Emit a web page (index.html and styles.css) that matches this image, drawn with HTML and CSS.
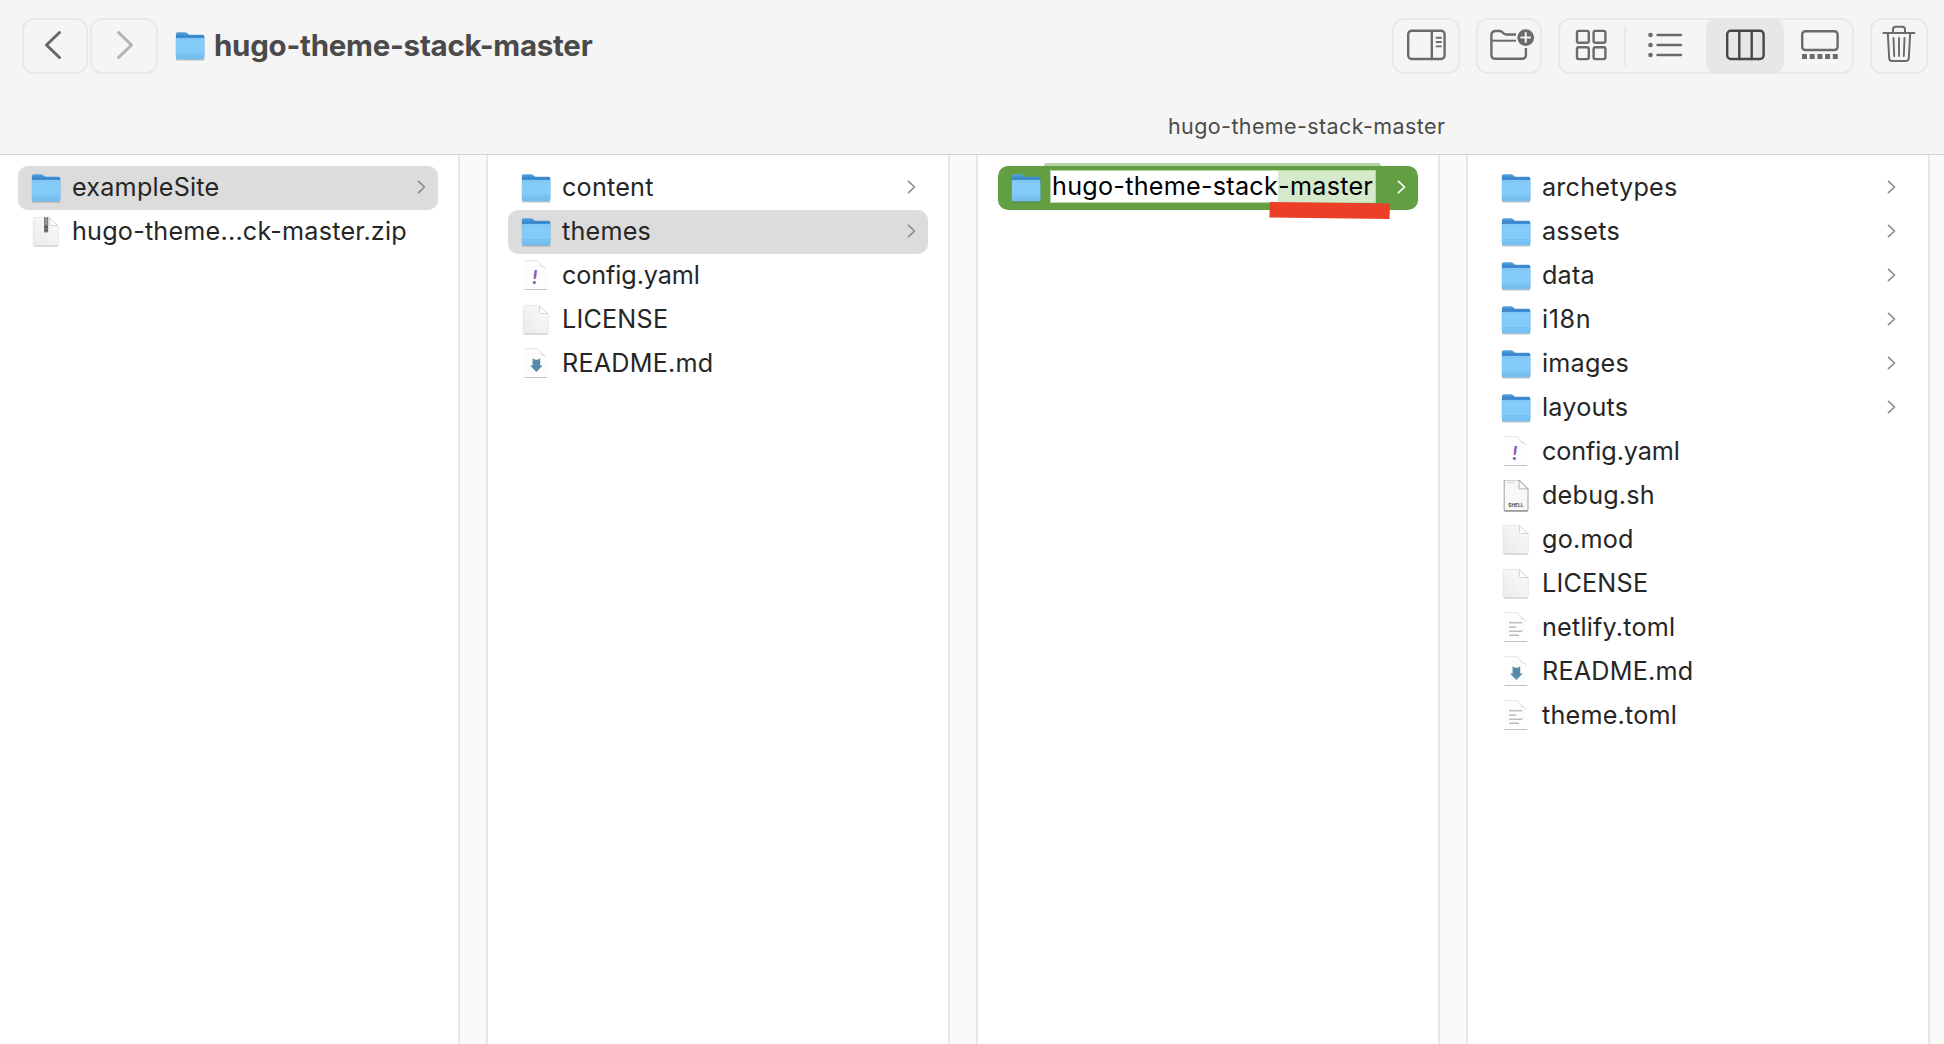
FILE: index.html
```html
<!DOCTYPE html>
<html lang="en">
<head>
<meta charset="utf-8">
<title>hugo-theme-stack-master</title>
<link rel="stylesheet" href="styles.css">
</head>
<body>
<svg class="defs" width="0" height="0" aria-hidden="true">
  <defs>
    <linearGradient id="g-back" x1="0" y1="0" x2="0" y2="1"><stop offset="0" stop-color="#57a4dc"/><stop offset=".22" stop-color="#2f7cc6"/><stop offset="1" stop-color="#3f8fd0"/></linearGradient>
    <linearGradient id="g-front" x1="0" y1="0" x2="0" y2="1"><stop offset="0" stop-color="#7fc4f2"/><stop offset=".2" stop-color="#86ccf8"/><stop offset=".75" stop-color="#82caf8"/><stop offset="1" stop-color="#70bbea"/></linearGradient>
    <linearGradient id="g-doc" x1="1" y1="0" x2="0" y2="1"><stop offset="0" stop-color="#fafafa"/><stop offset=".5" stop-color="#f3f3f3"/><stop offset="1" stop-color="#e9e9e9"/></linearGradient>
  </defs>
  <symbol id="folder" viewBox="0 0 30 32">
    <path d="M1 29.9h28.4" stroke="#000" stroke-opacity=".3" stroke-width="1"/>
    <path d="M.9 4Q.9 2.200 2.600 2.200h7.500q1 0 1.800.7l1.600 1.300q.6.5 1.500.5h12.700q1.600 0 1.600 1.600V27H.9z" fill="url(#g-back)"/>
    <path d="M.9 9Q.9 7.700 2.200 7.700h25.800q1.300 0 1.300 1.300v19q0 1.400-1.400 1.400H2.300Q.9 29.400.9 28z" fill="url(#g-front)"/>
    <path d="M1 23.800h28.200" stroke="#6ab6e8" stroke-width=".7"/><path d="M1 26h28.200" stroke="#6ab6e8" stroke-width=".6"/>
  </symbol>
  <symbol id="doc" viewBox="0 0 30 32">
    <path d="M3.500 1.300H18l9.300 8.700v18.700q0 1.300-1.300 1.300H3.500q-1.300 0-1.300-1.300v-26q0-1.400 1.300-1.400z" fill="url(#g-doc)" stroke="#e2e2e2" stroke-width=".8"/>
    <path d="M3 30.100h23.600" stroke="#c9c9c9" stroke-width="1"/>
    <path d="M18.400 1.700v6.600q0 1.200 1.200 1.200h7z" fill="#fff" stroke="#cdcdcd" stroke-width=".8"/>
  </symbol>
  <symbol id="zip" viewBox="0 0 30 32">
    <use href="#doc" width="30" height="32"/>
    <path d="M13 1h4.200v14.500q0 1-1 1H14q-1 0-1-1z" fill="#777b7e"/>
    <path d="M15.100 1v8" stroke="#d4d7d8" stroke-width="1.400" stroke-dasharray="1.300 1.300"/>
    <path d="M13.800 10h2.600v5h-2.600z" fill="#45494c"/><path d="M14.700 11.500h.8v2.500h-.8z" fill="#ccc"/>
  </symbol>
  <symbol id="page" viewBox="0 0 30 32">
    <path d="M3.700.8h13.300l8.800 8.500V29H3.700z" fill="#fdfdfd"/>
    <path d="M3.700.7H16q2 .4 3 3" fill="none" stroke="#e2e2e2" stroke-width=".9"/>
    <path d="M17 1.500q2 1 2 4.500 4 0 6.400 3.200z" fill="#e9e9e9"/><path d="M20 6.200q3.500.2 5.400 3" fill="none" stroke="#d2d2d2" stroke-width=".9"/>
    <path d="M3.500 29.500h22.800" stroke="#c2c2c2" stroke-width="1"/>
  </symbol>
  <symbol id="md" viewBox="0 0 30 32">
    <use href="#page" width="30" height="32"/>
    <path d="M11.600 10.300q3.800 3 7.600 0V17.500h2.500L15.400 23.900l-6.400-6.400h2.600z" fill="#568aa9"/>
  </symbol>
  <symbol id="toml" viewBox="0 0 30 32">
    <use href="#page" width="30" height="32"/>
    <path d="M8 10.800h13.300M8 15h7.300M8 19.200h13.300M8 23.300h10" stroke="#bdbdbd" stroke-width="1.400"/>
  </symbol>
  <symbol id="shell" viewBox="0 0 30 32">
    <path d="M3.200 0H18l9 9v21q0 1-1 1H4.200q-1 0-1-1z" fill="#f8f8f8" stroke="#a9a9a9" stroke-width="1.100"/>
    <path d="M3.500 30.900h23" stroke="#7d7d7d" stroke-width="1.100"/>
    <path d="M18 .5v8.300h8.500z" fill="#fff" stroke="#aaa" stroke-width=".9"/>
    <path d="M6 2.800h7.500" stroke="#c4c4c4" stroke-width=".7"/>
  </symbol>
  <symbol id="chev" viewBox="0 0 10 16"><path d="M1.500 2.400l6 5.600-6 5.600" fill="none" stroke="currentColor" stroke-width="1.700" stroke-linecap="round" stroke-linejoin="round"/></symbol>
</svg>

<header class="toolbar">
  <div class="bar">
    <button class="btn back"><svg width="20" height="32" viewBox="0 0 20 32"><path d="M16.500 3.500L3.500 16l13 12.500" /></svg></button>
    <button class="btn forward"><svg width="20" height="32" viewBox="0 0 20 32"><path d="M3.500 3.500L16.500 16l-13 12.500" /></svg></button>
    <svg class="title-icon" width="30" height="32"><use href="#folder"/></svg>
    <h1 class="title">hugo-theme-stack-master</h1>
    <div class="tools">
      <button class="btn sidebar"><svg width="44" height="44" viewBox="0 0 44 44"><rect x="4.200" y="6.800" width="36.400" height="28.200" rx="3.500"/><path d="M27.800 7v28"/><path class="thin" d="M32.500 13.700h4.500M32.500 18h4.500M32.500 22.400h4.500"/></svg></button>
      <button class="btn newfolder"><svg width="44" height="44" viewBox="0 0 44 44"><path class="butt" d="M29 10.500H19c-3 0-3.200-3.500-6.200-3.500H8.500Q4.400 7 4.400 11.200v19.500q0 4.100 4.100 4.100h26.200q4.200 0 4.200-4.100V24"/><path class="mid butt" d="M4.200 16.700H29"/><circle class="solid" cx="38.700" cy="13.600" r="8.400"/><path class="plus" d="M34.200 13.600h9M38.700 9.100v9"/></svg></button>
      <div class="views">
        <button class="view grid"><svg width="44" height="44" viewBox="0 0 44 44"><rect x="7" y="6.900" width="11.800" height="11.800" rx="1.800"/><rect x="23.600" y="6.900" width="11.800" height="11.800" rx="1.800"/><rect x="7" y="23.300" width="11.800" height="11.800" rx="1.800"/><rect x="23.600" y="23.300" width="11.800" height="11.800" rx="1.800"/></svg></button>
        <button class="view list"><svg width="44" height="44" viewBox="0 0 44 44"><path d="M13.500 11H37M13.500 21H37M13.500 31H37"/><g class="solid"><circle cx="6.500" cy="11" r="2.300"/><circle cx="6.500" cy="21" r="2.300"/><circle cx="6.500" cy="31" r="2.300"/></g></svg></button>
        <button class="view columns-view active"><svg width="44" height="44" viewBox="0 0 44 44"><rect x="4.200" y="6.800" width="36.400" height="28.200" rx="3.500"/><path d="M16.300 7v28M28.700 7v28"/></svg></button>
        <button class="view gallery"><svg width="44" height="44" viewBox="0 0 44 44"><rect x="5.200" y="7.200" width="35.400" height="18.800" rx="3.200"/><g class="solid"><rect x="5" y="30" width="5" height="5" rx=".6"/><rect x="12.700" y="30" width="5" height="5" rx=".6"/><rect x="20.400" y="30" width="5" height="5" rx=".6"/><rect x="28.100" y="30" width="5" height="5" rx=".6"/><rect x="35.800" y="30" width="5" height="5" rx=".6"/></g></svg></button>
      </div>
      <button class="btn trash"><svg width="44" height="44" viewBox="0 0 44 44"><path class="mid" d="M6.500 9h31M16 8.800V5.300Q16 2.700 18.600 2.700h6.800Q28 2.700 28 5.300v3.500M10.800 9.300l1.400 24.800q.2 2.900 3 2.900h13.600q2.800 0 3-2.900l1.400-24.800"/><path class="thin" d="M16.500 14l.7 18M22 14v18M27.500 14l-.7 18"/></svg></button>
    </div>
  </div>
  <div class="path">hugo-theme-stack-master</div>
</header>

<main class="browser">
  <ul class="column">
    <li class="row selected"><svg class="icon"><use href="#folder"/></svg><span class="name">exampleSite</span><svg class="chev"><use href="#chev"/></svg></li>
    <li class="row"><svg class="icon"><use href="#zip"/></svg><span class="name">hugo-theme...ck-master.zip</span></li>
  </ul>
  <div class="gutter"></div>
  <ul class="column">
    <li class="row"><svg class="icon"><use href="#folder"/></svg><span class="name">content</span><svg class="chev"><use href="#chev"/></svg></li>
    <li class="row selected"><svg class="icon"><use href="#folder"/></svg><span class="name">themes</span><svg class="chev"><use href="#chev"/></svg></li>
    <li class="row"><svg class="icon"><use href="#page"/><text x="11.200" y="24" class="bang">!</text></svg><span class="name yaml">config.yaml</span></li>
    <li class="row"><svg class="icon"><use href="#doc"/></svg><span class="name">LICENSE</span></li>
    <li class="row"><svg class="icon"><use href="#md"/></svg><span class="name">README.md</span></li>
  </ul>
  <div class="gutter"></div>
  <ul class="column">
    <li class="row editing"><svg class="icon"><use href="#folder"/></svg><span class="field">hugo-theme-stack<span class="picked">-master</span></span><svg class="chev"><use href="#chev"/></svg>
      <svg class="marker" width="122" height="18" viewBox="0 0 122 18"><path d="M.8 0L121 1.500 120.500 17 .5 15.600z" fill="#eb4027"/></svg></li>
  </ul>
  <div class="gutter"></div>
  <ul class="column">
    <li class="row"><svg class="icon"><use href="#folder"/></svg><span class="name">archetypes</span><svg class="chev"><use href="#chev"/></svg></li>
    <li class="row"><svg class="icon"><use href="#folder"/></svg><span class="name">assets</span><svg class="chev"><use href="#chev"/></svg></li>
    <li class="row"><svg class="icon"><use href="#folder"/></svg><span class="name">data</span><svg class="chev"><use href="#chev"/></svg></li>
    <li class="row"><svg class="icon"><use href="#folder"/></svg><span class="name wide">i18n</span><svg class="chev"><use href="#chev"/></svg></li>
    <li class="row"><svg class="icon"><use href="#folder"/></svg><span class="name">images</span><svg class="chev"><use href="#chev"/></svg></li>
    <li class="row"><svg class="icon"><use href="#folder"/></svg><span class="name">layouts</span><svg class="chev"><use href="#chev"/></svg></li>
    <li class="row"><svg class="icon"><use href="#page"/><text x="11.200" y="24" class="bang">!</text></svg><span class="name yaml">config.yaml</span></li>
    <li class="row"><svg class="icon"><use href="#shell"/><text x="7.200" y="26.800" class="shell-label" textLength="15.400" lengthAdjust="spacingAndGlyphs">SHELL</text></svg><span class="name">debug.sh</span></li>
    <li class="row"><svg class="icon"><use href="#doc"/></svg><span class="name">go.mod</span></li>
    <li class="row"><svg class="icon"><use href="#doc"/></svg><span class="name">LICENSE</span></li>
    <li class="row"><svg class="icon"><use href="#toml"/></svg><span class="name">netlify.toml</span></li>
    <li class="row"><svg class="icon"><use href="#md"/></svg><span class="name">README.md</span></li>
    <li class="row"><svg class="icon"><use href="#toml"/></svg><span class="name">theme.toml</span></li>
  </ul>
  <div class="gutter"></div>
</main>
</body>
</html>
```
FILE: styles.css
```css
* { box-sizing: border-box; }
body {
  margin: 0;
  width: 1944px;
  height: 1044px;
  overflow: hidden;
  display: flex;
  flex-direction: column;
  background: #fff;
  color: #262626;
  font-family: Inter, "Liberation Sans", sans-serif;
}
.defs { position: absolute; }
.toolbar {
  height: 155px;
  flex: none;
  background: #f5f5f5;
  border-bottom: 1px solid #d3d3d3;
}
.bar { display: flex; align-items: center; padding: 18px 16px 0 22px; height: 74px; }
button { margin: 0; padding: 0; font: inherit; background: none; border: 0; display: flex; align-items: center; justify-content: center; }
button svg { flex: none; overflow: visible; fill: none; stroke: #6b6b6b; stroke-width: 2.4; stroke-linecap: round; stroke-linejoin: round; }
.btn { width: 67px; height: 56px; border: 2px solid #e9e9e9; border-radius: 12px; }
.back, .forward { padding-bottom: 2px; }
.back { width: 66px; }
.back svg { stroke: #676767; stroke-width: 3; margin-right: 4px; }
.forward { width: 68px; margin-left: 2px; }
.forward svg { stroke: #b3b3b3; stroke-width: 3; margin-left: 2px; }
.title-icon { margin-left: 17px; }
.title { margin: -2px 0 0 9px; font-size: 29.5px; line-height: 36px; font-weight: 700; letter-spacing: -0.25px; color: #4a4a4a; white-space: nowrap; }
.tools { margin-left: auto; display: flex; gap: 16px; }
.sidebar { width: 68px; }
.newfolder { width: 66px; }
.trash { width: 58px; }
.thin { stroke-width: 1.9; }
.mid { stroke-width: 2; }
.butt { stroke-linecap: butt; }
.solid { fill: #6b6b6b; stroke: none; }
.plus { stroke: #f5f5f5; stroke-width: 2; }
.views { display: flex; width: 296px; height: 56px; border-radius: 12px; box-shadow: inset 0 0 0 2px #e9e9e9; }
.view { height: 56px; border-radius: 12px; }
.grid { width: 67px; position: relative; }
.grid::after { content: ""; position: absolute; right: -1px; top: 8px; width: 2px; height: 40px; background: #e9e9e9; }
.list { width: 81px; }
.active { width: 78px; background: #e7e7e7; }
.active svg { stroke: #474747; }
.gallery { width: 70px; }
.path { padding: 38px 0 0 1168px; font-size: 21.5px; line-height: 28px; color: #4b4b4b; white-space: nowrap; letter-spacing: 0.4px; }

.browser { flex: 1; display: flex; }
.column { list-style: none; margin: 0; padding: 11px 20px; width: 460px; flex: none; }
.column:first-child { width: 458px; padding-left: 18px; }
.gutter { width: 30px; flex: none; background: #fafafa; border: solid #e7e7e7; border-width: 0 2px; }
.gutter:last-child { flex: 1; border-right: 0; }
.row { position: relative; width: 420px; height: 44px; padding: 0 11px 0 13px; display: flex; align-items: center; border-radius: 10px; }
.selected { background: #dcdcdc; }
.icon { width: 30px; height: 32px; flex: none; }
.name { margin: -2px 0 0 11px; font-size: 25.2px; line-height: 32px; letter-spacing: 0.2px; white-space: nowrap; }
.yaml { letter-spacing: -0.1px; }
.wide { letter-spacing: 0.6px; }
.chev { width: 10px; height: 16px; margin-left: auto; margin-bottom: 2px; color: #8c8c8c; flex: none; }
.bang { font: italic 900 19px Lato, sans-serif; fill: #8a5fb0; }
.shell-label { font: 700 5px Inter, sans-serif; fill: #4d4d4d; }

.editing { background: #649e43; }
.editing::before { content: ""; position: absolute; left: 46px; top: -3px; width: 337px; height: 3px; background: #b5d3a5; border-radius: 5px 5px 0 0; }
.editing .chev { color: #fff; }
.field { margin-left: 9px; margin-top: -3px; width: 326px; height: 33px; padding-left: 1px; border: 1px solid #b9d8a9; background: #fff; color: #000; display: flex; font-size: 25.2px; line-height: 31px; letter-spacing: 0.25px; white-space: nowrap; }
.picked { flex: 1; background: #d5e9cb; }
.marker { position: absolute; left: 271px; top: 36px; }
```
